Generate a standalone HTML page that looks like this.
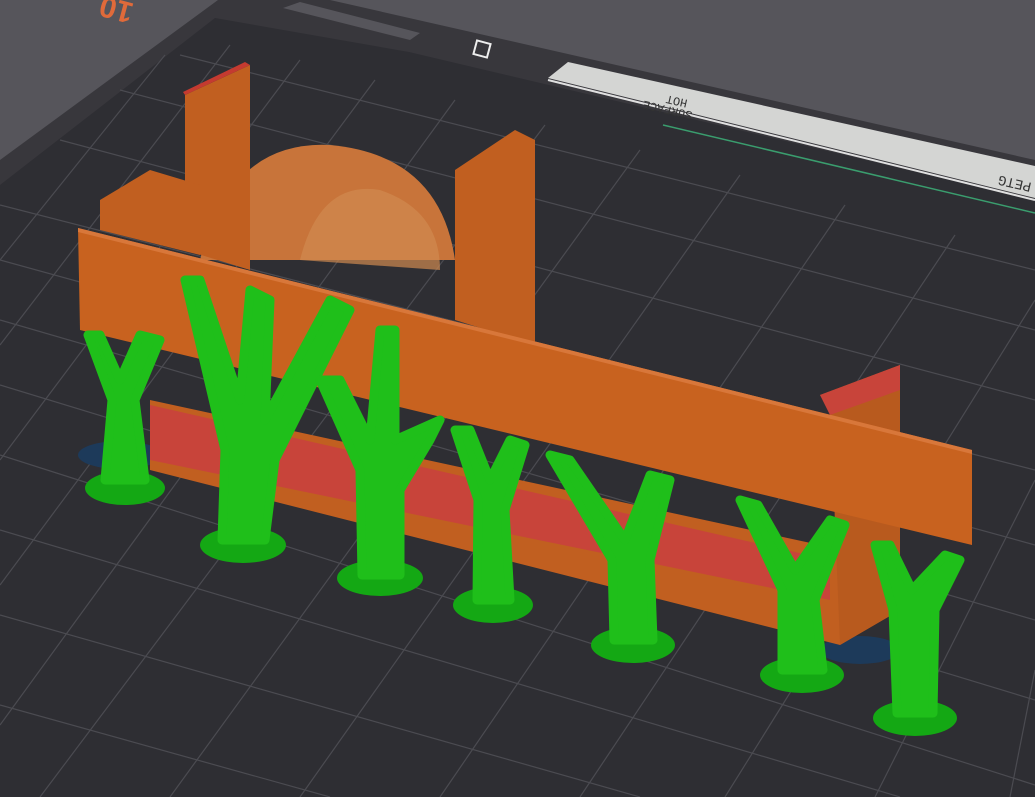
<!DOCTYPE html>
<html><head><style>html,body{margin:0;padding:0;background:#56555b;overflow:hidden}svg{display:block}</style></head>
<body>
<svg width="1035" height="797" viewBox="0 0 1035 797" xmlns="http://www.w3.org/2000/svg">
<rect width="1035" height="797" fill="#56555b"/>
<polygon points="0,160 218,0 330,0 1035,160 1035,797 0,797" fill="#38373c"/>
<polygon points="283,8 300,2 420,33 410,40" fill="#56555b"/>
<polygon points="0,185 215,18 409,52 1035,200 1035,797 0,797" fill="#2e2e33"/>
<polygon points="568,62 1035,166 1035,198 548,78" fill="#d4d5d3"/>
<line x1="548" y1="80" x2="1035" y2="200" stroke="#e0e0e0" stroke-width="2"/>
<text x="0" y="0" font-family="Liberation Mono,monospace" font-size="12" fill="#333" transform="translate(688,100) rotate(193)">HOT</text>
<text x="0" y="0" font-family="Liberation Mono,monospace" font-size="12" fill="#333" transform="translate(693,112) rotate(193)">SURFACE</text>
<text x="0" y="0" font-family="Liberation Mono,monospace" font-size="14" fill="#333" transform="translate(1032,183) rotate(193)">PETG</text>
<text x="0" y="0" font-family="Liberation Sans,sans-serif" font-size="30" font-weight="bold" fill="#e06a3a" transform="translate(135,4) rotate(195)">10</text>
<rect x="475" y="42" width="14" height="14" fill="none" stroke="#eee" stroke-width="2" transform="rotate(15 482 49)"/>
<line x1="663" y1="125" x2="1035" y2="213" stroke="#3a9d6e" stroke-width="1.5"/>
<g stroke="#4b4b51" stroke-width="1.2">
<line x1="0" y1="205" x2="1035" y2="470"/><line x1="0" y1="260" x2="1035" y2="545"/>
<line x1="0" y1="320" x2="1035" y2="620"/><line x1="0" y1="385" x2="1035" y2="700"/>
<line x1="0" y1="455" x2="1035" y2="785"/><line x1="0" y1="530" x2="900" y2="797"/>
<line x1="0" y1="615" x2="640" y2="797"/><line x1="0" y1="705" x2="330" y2="797"/>
<line x1="60" y1="140" x2="1035" y2="400"/><line x1="120" y1="90" x2="1035" y2="330"/>
<line x1="180" y1="55" x2="1035" y2="270"/>
<line x1="165" y1="55" x2="0" y2="260"/><line x1="230" y1="45" x2="0" y2="345"/>
<line x1="300" y1="60" x2="0" y2="460"/><line x1="375" y1="80" x2="0" y2="585"/>
<line x1="455" y1="100" x2="0" y2="725"/><line x1="545" y1="125" x2="40" y2="797"/>
<line x1="640" y1="150" x2="170" y2="797"/><line x1="740" y1="175" x2="300" y2="797"/>
<line x1="845" y1="205" x2="440" y2="797"/><line x1="955" y1="235" x2="580" y2="797"/>
<line x1="1035" y1="300" x2="725" y2="797"/><line x1="1035" y1="480" x2="875" y2="797"/>
<line x1="1035" y1="670" x2="1010" y2="797"/>
</g>
<ellipse cx="120" cy="455" rx="42" ry="14" fill="#1d3a5a"/>
<ellipse cx="860" cy="650" rx="40" ry="14" fill="#1d3a5a"/>
<path d="M200,260 Q230,140 330,145 Q440,155 455,260 Z" fill="#c8743a"/>
<path d="M300,260 Q320,180 380,190 Q440,210 440,270 Z" fill="#d08a50" opacity=".7"/>
<polygon points="185,95 250,65 250,270 185,250" fill="#c15f20"/>
<polygon points="185,95 250,65 245,62 183,92" fill="#c43a30"/>
<polygon points="455,170 515,130 535,140 535,345 455,320" fill="#c15f20"/>
<polygon points="100,200 150,170 200,185 200,255 100,230" fill="#c15f20"/>
<polygon points="150,400 820,545 890,500 900,610 840,645 150,470" fill="#c15f20"/>
<polygon points="150,405 830,560 830,600 150,460" fill="#c8443a"/>
<polygon points="820,395 900,365 900,610 840,645 830,400" fill="#b85a1e"/>
<polygon points="820,395 900,365 900,390 830,415" fill="#c8443a"/>
<polygon points="78,228 972,450 972,545 80,330" fill="#c8621f"/>
<polygon points="78,228 972,450 972,454 78,232" fill="#d8773a"/>
<g fill="#14a814">
<ellipse cx="125" cy="488" rx="40" ry="17"/>
<ellipse cx="243" cy="545" rx="43" ry="18"/>
<ellipse cx="380" cy="578" rx="43" ry="18"/>
<ellipse cx="493" cy="605" rx="40" ry="18"/>
<ellipse cx="633" cy="645" rx="42" ry="18"/>
<ellipse cx="802" cy="675" rx="42" ry="18"/>
<ellipse cx="915" cy="718" rx="42" ry="18"/>
</g>
<g fill="#1fbf1a" stroke="#1fbf1a" stroke-width="9" stroke-linejoin="round">
<path d="M105,480 L112,400 L88,335 L100,335 L120,380 L140,335 L160,340 L135,400 L145,480 Z"/>
<path d="M222,540 L225,450 L185,280 L200,280 L240,400 L250,290 L270,300 L265,420 L330,300 L350,310 L275,460 L265,540 Z"/>
<path d="M362,575 L360,470 L320,380 L340,380 L370,440 L380,330 L395,330 L395,440 L440,420 L430,440 L400,490 L400,575 Z"/>
<path d="M477,600 L478,500 L455,430 L470,430 L490,480 L510,440 L525,445 L505,510 L510,600 Z"/>
<path d="M614,640 L612,560 L550,455 L570,460 L625,540 L650,475 L670,480 L650,560 L653,640 Z"/>
<path d="M782,670 L782,590 L740,500 L758,505 L795,570 L830,520 L845,525 L815,600 L823,670 Z"/>
<path d="M897,713 L893,610 L875,545 L890,545 L912,590 L945,555 L960,560 L935,610 L933,713 Z"/>
</g>
</svg>
</body></html>
